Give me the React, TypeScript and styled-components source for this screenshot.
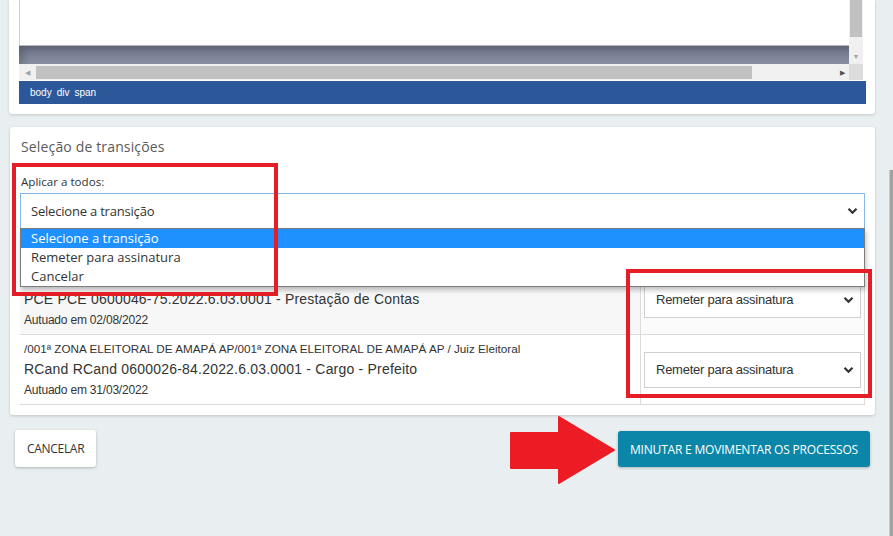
import React from "react";
import styled, { createGlobalStyle } from "styled-components";

const GlobalStyle = createGlobalStyle`
  html, body { margin: 0; padding: 0; background: #e9eef1; }
  body { font-family: "Open Sans", "Liberation Sans", sans-serif; overflow: hidden; }
  * { box-sizing: border-box; }
`;

const Page = styled.div`
  position: relative;
  width: 893px;
  height: 536px;
  overflow: hidden;
  padding: 0 18px 0 9px;
`;

const TopCard = styled.div`
  width: 866px;
  background: #fff;
  border-radius: 0 0 3px 3px;
  box-shadow: 0 1px 3px rgba(0, 0, 0, 0.16);
  padding: 0 0 10px 10px;
`;

const Editor = styled.div`
  width: 847px;
  display: grid;
  grid-template-columns: 1fr 14px 3px;
`;

const EditorMain = styled.div`
  display: flex;
  flex-direction: column;
  height: 64px;
`;

const EditorDoc = styled.div`
  height: 46px;
  background: #fff;
  border-left: 1px solid #d0d0d0;
  border-bottom: 1px solid #b8b8b8;
`;

const EditorShade = styled.div`
  flex: 1;
  background: linear-gradient(#6c7287, #8a91a4);
  box-shadow: inset 6px 3px 6px rgba(0, 0, 0, 0.15);
`;

const VScroll = styled.div`
  height: 64px;
  background: #f0f0f0;
  display: flex;
  flex-direction: column;
  align-items: center;
`;

const VThumb = styled.div`
  width: 12px;
  height: 47px;
  background: #c1c1c1;
`;

const Arrow = styled.span<{ $dark?: boolean }>`
  font-size: 7px;
  line-height: 1;
  color: ${(p) => (p.$dark ? "#505050" : "#a3a3a3")};
`;

const VArrowWrap = styled.div`
  padding-top: 5px;
`;

const HScroll = styled.div`
  height: 16px;
  background: #f0f0f0;
  display: flex;
  align-items: center;
  padding: 0 4px 0 6px;
  gap: 6px;
`;

const HThumb = styled.div`
  width: 716px;
  height: 13px;
  background: #c1c1c1;
`;

const Spacer = styled.div`
  flex: 1;
`;

const Corner = styled.div`
  background: #dcdcdc;
`;

const Blank = styled.div`
  background: #fff;
`;

const StatusBar = styled.div`
  grid-column: 1 / -1;
  height: 23px;
  background: #2c5899;
  color: #fff;
  font-family: "Liberation Sans", Arial, sans-serif;
  font-size: 10px;
  display: flex;
  align-items: center;
  gap: 5px;
  padding-left: 11px;
  margin-top: 1px;
`;

const Card = styled.div`
  position: relative;
  margin: 13px 0 0 1px;
  width: 865px;
  background: #fff;
  border-radius: 3px;
  box-shadow: 0 1px 3px rgba(0, 0, 0, 0.18);
  padding: 10px 10px 10px 10px;
`;

const Title = styled.div`
  font-size: 14px;
  line-height: 20px;
  letter-spacing: 0.15px;
  color: #5a5a5a;
  padding-left: 1px;
`;

const Label = styled.div`
  margin-top: 17px;
  font-size: 11.6px;
  line-height: 16px;
  color: #333;
  padding-left: 1px;
`;

const SelectWrap = styled.div`
  position: relative;
  margin-top: 3px;
`;

const SelectBox = styled.div<{ $focus?: boolean; $sans?: boolean }>`
  height: 36px;
  display: flex;
  align-items: center;
  justify-content: space-between;
  border: 1px solid ${(p) => (p.$focus ? "#86b9e8" : "#cfcfcf")};
  background: #fff;
  padding: 0 6px 0 ${(p) => (p.$focus ? "10px" : "11px")};
  font-family: ${(p) => (p.$sans ? '"Liberation Sans", Arial, sans-serif' : '"Open Sans", sans-serif')};
  font-size: 13px;
  letter-spacing: ${(p) => (p.$sans ? "-0.25px" : "-0.2px")};
  color: #333;
`;

const DropList = styled.div`
  position: absolute;
  left: 0;
  right: 0;
  top: 35px;
  z-index: 5;
  background: #fff;
  border: 1px solid #7c7c7c;
  box-shadow: 1px 3px 5px rgba(0, 0, 0, 0.25);
`;

const Option = styled.div<{ $active?: boolean }>`
  height: 19px;
  line-height: 19px;
  padding-left: 10px;
  font-size: 13px;
  color: ${(p) => (p.$active ? "#fff" : "#333")};
  background: ${(p) => (p.$active ? "#1e90ff" : "#fff")};
`;

const Table = styled.div`
  margin-top: 36px;
  display: grid;
  grid-template-columns: 620px 225px;
  border-bottom: 1px solid #dcdcdc;
`;

const InfoCell = styled.div<{ $striped?: boolean; $first?: boolean }>`
  background: ${(p) => (p.$striped ? "#f7f7f7" : "#fff")};
  border-top: ${(p) => (p.$first ? "none" : "1px solid #dcdcdc")};
  padding: 3px 4px 3px;
  font-family: "Liberation Sans", Arial, sans-serif;
  color: #333;
  display: flex;
  flex-direction: column;
`;

const Line = styled.div<{ $size: number; $spacing: number }>`
  min-height: 21px;
  font-size: ${(p) => p.$size}px;
  letter-spacing: ${(p) => p.$spacing}px;
  line-height: 21px;
  white-space: nowrap;
`;

const ActionCell = styled.div<{ $striped?: boolean; $first?: boolean }>`
  background: ${(p) => (p.$striped ? "#fbfbfb" : "#fff")};
  border-top: ${(p) => (p.$first ? "none" : "1px solid #dcdcdc")};
  border-left: 1px solid #dcdcdc;
  border-right: 1px solid #dcdcdc;
  padding: 0 3px 0 3px;
  display: flex;
  align-items: center;
`;

const ActionSelect = styled(SelectBox)`
  flex: 1;
`;

const Highlight = styled.div<{ $x: number; $y: number; $w: number; $h: number }>`
  position: absolute;
  left: ${(p) => p.$x}px;
  top: ${(p) => p.$y}px;
  width: ${(p) => p.$w}px;
  height: ${(p) => p.$h}px;
  border: 4px solid #e41e26;
  z-index: 10;
  pointer-events: none;
`;

const Footer = styled.div`
  position: relative;
  margin-top: 15px;
  padding: 0 5px 0 6px;
  display: flex;
  justify-content: space-between;
  align-items: flex-start;
`;

const Button = styled.button<{ $primary?: boolean }>`
  height: ${(p) => (p.$primary ? "36px" : "37px")};
  margin-top: ${(p) => (p.$primary ? "1px" : "0")};
  padding: 0 12px;
  border: none;
  border-radius: 3px;
  font-family: "Open Sans", sans-serif;
  font-size: 12px;
  letter-spacing: ${(p) => (p.$primary ? "-0.2px" : "-0.3px")};
  text-transform: uppercase;
  color: ${(p) => (p.$primary ? "#fff" : "#333")};
  background: ${(p) => (p.$primary ? "#0b86a8" : "#fff")};
  box-shadow: 0 1px 3px rgba(0, 0, 0, 0.25);
`;

const ArrowSvg = styled.svg`
  position: absolute;
  left: 493px;
  top: -16px;
  z-index: 10;
`;

const PageScroll = styled.div`
  position: absolute;
  right: 0;
  top: 170px;
  bottom: 0;
  width: 4px;
  background: #a2a2a2;
  border-left: 1px solid #c8c8c8;
`;

const Chevron = () => (
  <svg width="11" height="8" viewBox="0 0 11 8">
    <path d="M1.5 1.8 L5.5 5.8 L9.5 1.8" fill="none" stroke="#333" strokeWidth="2.2" />
  </svg>
);

const rows = [
  {
    zona: "",
    title: "PCE PCE 0600046-75.2022.6.03.0001 - Prestação de Contas",
    date: "Autuado em 02/08/2022",
  },
  {
    zona: "/001ª ZONA ELEITORAL DE AMAPÁ AP/001ª ZONA ELEITORAL DE AMAPÁ AP / Juiz Eleitoral",
    title: "RCand RCand 0600026-84.2022.6.03.0001 - Cargo - Prefeito",
    date: "Autuado em 31/03/2022",
  },
];

export default function App() {
  return (
    <>
      <GlobalStyle />
      <Page>
        <TopCard>
          <Editor>
            <EditorMain>
              <EditorDoc />
              <EditorShade />
            </EditorMain>
            <VScroll>
              <VThumb />
              <VArrowWrap>
                <Arrow>▼</Arrow>
              </VArrowWrap>
            </VScroll>
            <Blank />
            <HScroll>
              <Arrow>◀</Arrow>
              <HThumb />
              <Spacer />
              <Arrow $dark>▶</Arrow>
            </HScroll>
            <Corner />
            <Blank />
            <StatusBar>
              <span>body</span>
              <span>div</span>
              <span>span</span>
            </StatusBar>
          </Editor>
        </TopCard>

        <Card>
          <Title>Seleção de transições</Title>
          <Label>Aplicar a todos:</Label>
          <SelectWrap>
            <SelectBox $focus>
              <span>Selecione a transição</span>
              <Chevron />
            </SelectBox>
            <DropList>
              <Option $active>Selecione a transição</Option>
              <Option>Remeter para assinatura</Option>
              <Option>Cancelar</Option>
            </DropList>
          </SelectWrap>

          <Table>
            {rows.map((r, i) => (
              <React.Fragment key={i}>
                <InfoCell $striped={i === 0} $first={i === 0}>
                  <Line $size={11.7} $spacing={0}>{r.zona}</Line>
                  <Line $size={14} $spacing={0.2}>{r.title}</Line>
                  <Line $size={12} $spacing={-0.2}>{r.date}</Line>
                </InfoCell>
                <ActionCell $striped={i === 0} $first={i === 0}>
                  <ActionSelect $sans>
                    <span>Remeter para assinatura</span>
                    <Chevron />
                  </ActionSelect>
                </ActionCell>
              </React.Fragment>
            ))}
          </Table>

          <Highlight $x={2} $y={36} $w={266} $h={133} />
          <Highlight $x={616} $y={142} $w={246} $h={129} />
        </Card>

        <Footer>
          <Button>Cancelar</Button>
          <ArrowSvg width="115" height="70" viewBox="0 0 115 70">
            <polygon
              points="9,19 57,19 57,3 112,36 57,69 57,54 9,54"
              fill="#ec1c24"
              stroke="#ec1c24"
              strokeWidth="2"
              strokeLinejoin="round"
            />
          </ArrowSvg>
          <Button $primary>Minutar e movimentar os processos</Button>
        </Footer>
        <PageScroll />
      </Page>
    </>
  );
}
